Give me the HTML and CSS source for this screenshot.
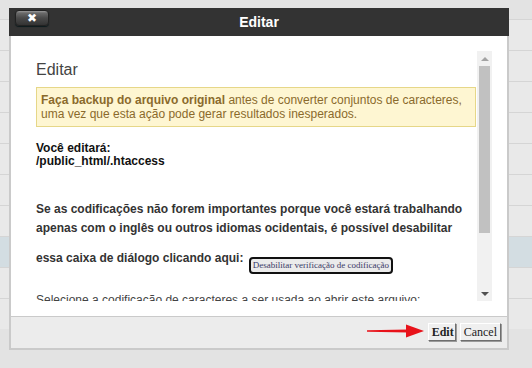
FILE: index.html
```html
<!DOCTYPE html>
<html lang="pt">
<head>
<meta charset="utf-8">
<title>Editar</title>
<link rel="stylesheet" href="styles.css">
</head>
<body>
<div class="rows">
  <div class="row"></div>
  <div class="row"></div>
  <div class="row"></div>
  <div class="row"></div>
  <div class="row"></div>
  <div class="row"></div>
  <div class="row"></div>
  <div class="row hl"></div>
  <div class="row"></div>
  <div class="row"></div>
</div>

<div class="dialog">
  <div class="dlg-head">
    <button class="close" type="button">&#x2716;</button>
    <div class="dlg-title">Editar</div>
  </div>
  <div class="dlg-body">
    <div class="scroll-wrap">
      <div class="scroll">
        <h2 class="heading">Editar</h2>
        <div class="warn"><b>Faça backup do arquivo original</b> antes de converter conjuntos de caracteres, uma vez que esta ação pode gerar resultados inesperados.</div>
        <p class="target">Você editará:<br>/public_html/.htaccess</p>
        <p class="note">Se as codificações não forem importantes porque você estará trabalhando apenas com o inglês ou outros idiomas ocidentais, é possível desabilitar essa caixa de diálogo clicando aqui: <button class="disable" type="button">Desabilitar verificação de codificação</button></p>
        <p class="select-label">Selecione a codificação de caracteres a ser usada ao abrir este arquivo:</p>
        <select class="enc"><option>utf-8</option></select>
      </div>
      <div class="vbar" aria-hidden="true">
        <div class="vbar-btn up"></div>
        <div class="vbar-track"><div class="vbar-thumb"></div></div>
        <div class="vbar-btn down"></div>
      </div>
    </div>
  </div>
  <div class="dlg-foot">
    <button class="btn strong" type="button">Edit</button>
    <button class="btn" type="button">Cancel</button>
  </div>
</div>

<svg class="arrow" width="60" height="14" viewBox="0 0 60 14">
  <path d="M1 6.2 L42 5.6 L42 8.4 L1 7.8 Z" fill="#e8121a"/>
  <path d="M40 0.5 L58 7 L40 13.5 Z" fill="#e8121a"/>
</svg>
</body>
</html>
```

FILE: styles.css
```css
* { box-sizing: border-box; }
html, body { margin: 0; padding: 0; }
body {
  width: 532px;
  height: 368px;
  overflow: hidden;
  position: relative;
  background: #e3e3e3;
  font-family: "Liberation Sans", Arial, sans-serif;
}

.rows { padding-top: 19px; }
.row {
  height: 31px;
  border-top: 1px solid #d5d5d5;
  background: #e9e9e9;
}
.row.hl { background: #d3dde2; }

.dialog {
  position: absolute;
  left: 9px;
  top: 8px;
  width: 500px;
  height: 342px;
  display: flex;
  flex-direction: column;
}

.dlg-head {
  height: 28px;
  background: #333333;
  display: grid;
  grid-template-columns: 1fr auto 1fr;
  align-items: center;
  padding: 0 6px;
}
.close {
  justify-self: start;
  align-self: start;
  margin-top: 2px;
  width: 34px;
  height: 16px;
  padding: 0;
  border: 1px solid #222;
  border-radius: 4px;
  background: linear-gradient(#9a9a9a 0, #6a6a6a 2px, #4a4a4a 50%, #333 100%);
  box-shadow: 0 1px 1px #0c1a1c;
  color: #fff;
  font: bold 12px/14px "DejaVu Sans", sans-serif;
  text-align: center;
}
.dlg-title {
  color: #fff;
  font-weight: bold;
  font-size: 14px;
}

.dlg-body {
  height: 281px;
  background: #fff;
  border: 2px solid #cacaca;
  border-top: 0;
  border-bottom: 1px solid #cacaca;
  padding: 15px 15px 15px 15px;
}
.scroll-wrap {
  height: 250px;
  display: flex;
}
.scroll {
  flex: 1;
  min-width: 0;
  overflow: hidden;
  padding: 10px 1px 0 10px;
  color: #333;
}

.vbar {
  width: 15px;
  flex: none;
  background: #f1f1f1;
  display: flex;
  flex-direction: column;
}
.vbar-btn {
  height: 15px;
  display: flex;
  align-items: center;
  justify-content: center;
}
.vbar-btn::before {
  content: "";
  width: 0;
  height: 0;
  border-left: 4px solid transparent;
  border-right: 4px solid transparent;
}
.vbar-btn.up::before { border-bottom: 4px solid #a3a3a3; }
.vbar-btn.down::before { border-top: 4px solid #505050; }
.vbar-track {
  flex: 1;
  padding: 0 2px;
}
.vbar-thumb {
  height: 167px;
  background: #c1c1c1;
}

.heading {
  margin: 0 0 8px;
  font-size: 16px;
  font-weight: normal;
  line-height: 18px;
  color: #444;
}
.warn {
  background: #fef6d2;
  border: 1px solid #e6d788;
  padding: 5px 4px;
  font-size: 12px;
  line-height: 14px;
  color: #8a6a2c;
}
.warn b { font-weight: bold; }

.target {
  margin: 15px 0 0;
  font-size: 12px;
  line-height: 13px;
  font-weight: bold;
  color: #111;
}
.note {
  margin: 32px 0 0;
  font-size: 12px;
  line-height: 19px;
  font-weight: bold;
  color: #333;
}
.disable {
  display: inline-block;
  vertical-align: -6px;
  margin: 19px 0 0 2px;
  height: 17px;
  padding: 0 2px;
  border: 2px solid #111;
  border-radius: 4px;
  background: #ebebeb;
  color: #3a3a66;
  font: 9px/13px "Liberation Serif", "Times New Roman", serif;
}
.select-label {
  margin: 19px 0 8px;
  font-size: 12px;
  line-height: 14px;
  color: #444;
}
.enc {
  height: 22px;
  font: 12px "Liberation Sans", Arial, sans-serif;
}

.dlg-foot {
  flex: 1;
  background: #ececec;
  border: 2px solid #cacaca;
  border-top: 0;
  display: flex;
  justify-content: flex-end;
  align-items: flex-start;
  gap: 4px;
  padding: 6px 6px 0 0;
}
.btn {
  height: 18px;
  padding: 0 3px;
  border: 1px solid;
  border-color: #fff #6e6e6e #6e6e6e #fff;
  box-shadow: 1px 1px 0 #9a9a9a;
  background: #efefef;
  color: #222;
  font: 12px/14px "Liberation Serif", "Times New Roman", serif;
}
.btn.strong { font-weight: bold; width: 28px; }

.arrow {
  position: absolute;
  left: 366px;
  top: 324px;
}
```
